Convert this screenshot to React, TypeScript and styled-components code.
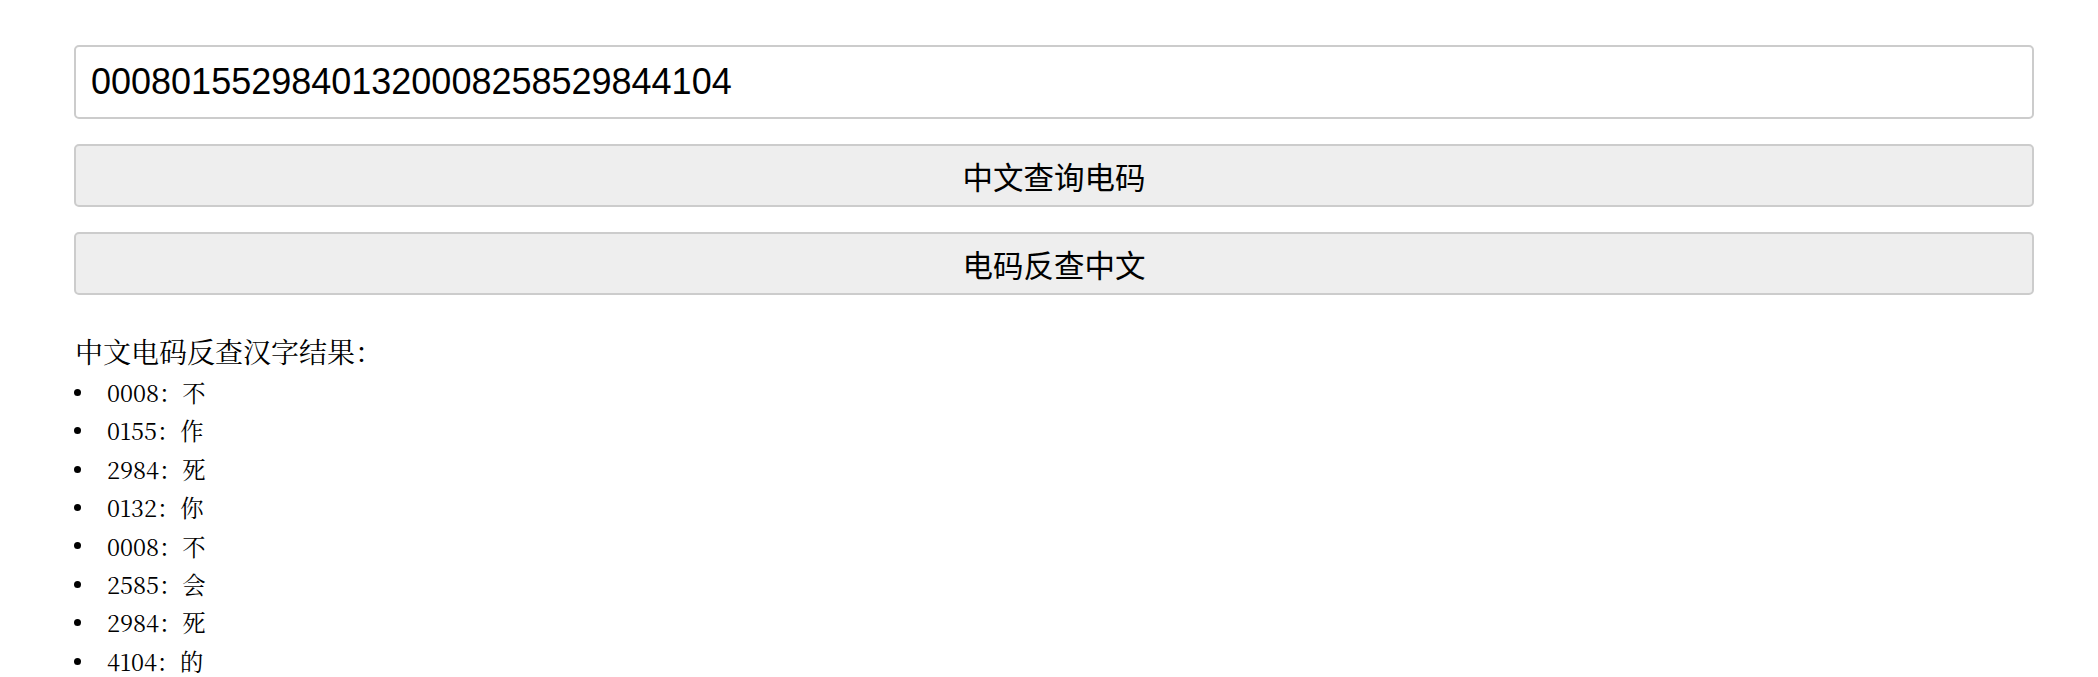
import React, { useState } from 'react';
import styled, { createGlobalStyle } from 'styled-components';

const GlobalStyle = createGlobalStyle`
  body {
    margin: 0;
    background: #fff;
  }
`;

const Page = styled.div`
  padding: 45px 64px 0 74px;
  display: flex;
  flex-direction: column;
`;

const CodeInput = styled.input`
  box-sizing: border-box;
  width: 100%;
  height: 74px;
  margin: 0;
  padding: 0 15px;
  border: 2px solid #cccccc;
  border-radius: 5px;
  background: #fff;
  color: #000;
  font-family: "Liberation Sans", Arial, sans-serif;
  font-size: 36px;
  outline: none;
`;

const ActionButton = styled.button`
  box-sizing: border-box;
  width: 100%;
  height: 63px;
  margin: 25px 0 0;
  padding: 0;
  border: 2px solid #cccccc;
  border-radius: 5px;
  background: #eeeeee;
  color: #000;
  font-family: "Noto Sans CJK SC", sans-serif;
  font-size: 30.5px;
  cursor: pointer;
`;

const ResultTitle = styled.div`
  margin: 39px 0 0 1px;
  font-family: "Noto Serif CJK SC", "Liberation Serif", "Noto Sans CJK SC", serif;
  font-size: 28px;
  line-height: 34px;
  color: #000;
  text-spacing-trim: space-all;
`;

const ResultList = styled.ul`
  margin: 5px 0 0;
  padding: 0;
  list-style: none;
`;

const ResultItem = styled.li`
  display: flex;
  align-items: center;
  font-family: "Noto Serif CJK SC", "Liberation Serif", "Noto Sans CJK SC", serif;
  font-size: 23.3px;
  line-height: 38.4px;
  color: #000;

  &::before {
    content: '';
    width: 7px;
    height: 7px;
    border-radius: 50%;
    background: #000;
    margin-right: 26px;
    flex-shrink: 0;
  }
`;

const codes: [string, string][] = [
  ['0008', '不'],
  ['0155', '作'],
  ['2984', '死'],
  ['0132', '你'],
  ['0008', '不'],
  ['2585', '会'],
  ['2984', '死'],
  ['4104', '的'],
];

const App: React.FC = () => {
  const [value, setValue] = useState('00080155298401320008258529844104');
  return (
    <>
      <GlobalStyle />
      <Page>
        <CodeInput value={value} onChange={(e) => setValue(e.target.value)} />
        <ActionButton>中文查询电码</ActionButton>
        <ActionButton>电码反查中文</ActionButton>
        <ResultTitle>中文电码反查汉字结果：</ResultTitle>
        <ResultList>
          {codes.map(([code, ch], i) => (
            <ResultItem key={i}>{code}：{ch}</ResultItem>
          ))}
        </ResultList>
      </Page>
    </>
  );
};

export default App;
